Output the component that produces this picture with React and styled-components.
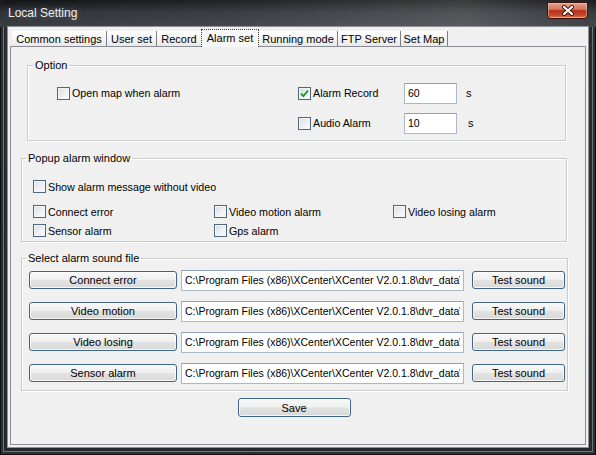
import styled, { createGlobalStyle } from "styled-components";

const GlobalStyle = createGlobalStyle`
  html, body {
    margin: 0;
    padding: 0;
    background: #1b1e21;
  }
  body {
    font-family: "Liberation Sans", Arial, sans-serif;
    font-size: 11px;
    color: #000;
  }
`;

const Window = styled.div`
  width: 596px;
  height: 455px;
  display: flex;
  flex-direction: column;
  background: linear-gradient(180deg, #2a2e32 0%, #25292d 100%);
  box-shadow: inset 0 0 0 1px #0e1011, inset 0 0 0 3px #2b3034, inset 0 0 0 4px #6f7478;
  border-radius: 6px 6px 0 0;
  overflow: hidden;
`;

const TitleBar = styled.div`
  height: 27px;
  flex: none;
  display: flex;
  align-items: flex-start;
  background:
    linear-gradient(90deg, rgba(255,255,255,0) 0%, rgba(255,255,255,0.06) 40%, rgba(255,255,255,0.16) 78%, rgba(255,255,255,0.04) 100%),
    linear-gradient(180deg, #121416 0%, #2f3337 45%, #3a3e42 100%);
`;

const Title = styled.div`
  padding: 6px 0 0 8px;
  color: #eeeeee;
  font-size: 12px;
  line-height: 14px;
  text-shadow: 0 0 6px rgba(255, 255, 255, 0.25);
`;

const CloseButton = styled.div`
  margin: 2px 8px 0 auto;
  width: 41px;
  height: 17px;
  box-sizing: border-box;
  border: 1px solid #3b1510;
  border-radius: 0 0 4px 4px;
  display: flex;
  align-items: center;
  justify-content: center;
  background: linear-gradient(180deg, #e5a08f 0%, #d47561 42%, #b83520 50%, #c3432a 78%, #df7a52 100%);
  box-shadow: inset 0 0 0 1px rgba(255, 210, 200, 0.45);
`;

const Client = styled.div`
  flex: 1;
  margin: 0 8px 8px;
  padding: 2px;
  display: flex;
  flex-direction: column;
  background: #f0f0f0;
  box-shadow: 0 0 0 1px #8d9296;
`;

const TabStrip = styled.div`
  height: 17px;
  flex: none;
  display: flex;
  align-items: flex-end;
  padding-left: 2px;
  position: relative;
  z-index: 1;
`;

const Tab = styled.div`
  width: ${(p) => p.$w}px;
  height: ${(p) => (p.$active ? 18 : 15)}px;
  box-sizing: border-box;
  display: flex;
  align-items: center;
  justify-content: center;
  white-space: nowrap;
  font-size: 11px;
  padding-bottom: ${(p) => (p.$active ? 2 : 0)}px;
  background: ${(p) => (p.$active ? "#f7f7f7" : "linear-gradient(180deg, #ffffff 0%, #f3f3f3 60%, #e9e9e9 100%)")};
  border-right: 1px solid #7d7f82;
  ${(p) =>
    p.$active &&
    `
    margin-left: -1px;
    margin-bottom: -1px;
    border: 1px dotted #3a3a3a;
    border-bottom: none;
  `}
`;

const TabPanel = styled.div`
  flex: 1;
  box-sizing: border-box;
  border: 1px solid #898c95;
  background: #f0f0f0;
  display: flex;
  flex-direction: column;
`;

const Group = styled.fieldset`
  margin: ${(p) => p.$mt}px ${(p) => p.$mr}px 0 ${(p) => p.$ml}px;
  padding: 0;
  min-width: 0;
  border: 1px solid #c9cbcd;
  box-shadow: inset 1px 1px 0 #ffffff, 1px 1px 0 #ffffff;
`;

const Legend = styled.legend`
  margin-left: ${(p) => p.$ml}px;
  padding: 0 2px;
  line-height: 14px;
  font-size: 11px;
`;

const OptionGrid = styled.div`
  display: grid;
  grid-template-columns: 241px 106px 62px auto;
  grid-auto-rows: 30px;
  align-items: center;
  padding: 6px 0 2px 29px;
`;

const PopupBody = styled.div`
  padding: 12px 0 1px 11px;
  display: flex;
  flex-direction: column;
`;

const SingleRow = styled.div`
  height: 19px;
  display: flex;
  align-items: center;
  margin-bottom: 6px;
`;

const PopupGrid = styled.div`
  display: grid;
  grid-template-columns: 181px 179px auto;
  grid-auto-rows: 19px;
  align-items: center;
`;

const CheckLabel = styled.label`
  display: inline-flex;
  align-items: center;
  gap: 2px;
  white-space: nowrap;
  font-size: 10.7px;
`;

const Box = styled.span`
  width: 13px;
  height: 13px;
  box-sizing: border-box;
  border: 1px solid #50667b;
  background: linear-gradient(135deg, #d6dce2 0%, #eef1f4 55%, #fbfbfb 100%);
  box-shadow: inset 0 0 0 1px #f4f6f8;
  display: flex;
  align-items: center;
  justify-content: center;
`;

const Unit = styled.span`
  padding-left: ${(p) => p.$pl || 0}px;
`;

const TextField = styled.input`
  width: ${(p) => p.$w}px;
  height: 21px;
  box-sizing: border-box;
  margin: 0;
  padding: 0 3px;
  border: 1px solid #a9b9cb;
  border-top-color: #8ea2b8;
  background: #fff;
  font-family: "Liberation Sans", Arial, sans-serif;
  font-size: 10.5px;
  color: #000;
  outline: none;
`;

const SoundList = styled.div`
  display: flex;
  flex-direction: column;
  gap: 9px;
  padding: 4px 0 6px 7px;
`;

const SoundRow = styled.div`
  height: 22px;
  display: flex;
  align-items: center;
`;

const PushButton = styled.button`
  width: ${(p) => p.$w}px;
  height: ${(p) => p.$h || 18}px;
  margin: 0 0 0 ${(p) => p.$ml || 0}px;
  padding: 0;
  box-sizing: border-box;
  border: 1px solid #3e6587;
  border-radius: 3px;
  background: linear-gradient(180deg, #f8f8f8 0%, #efefef 48%, #e2e2e2 52%, #d9d9d9 100%);
  box-shadow: inset 0 0 0 1px rgba(255, 255, 255, 0.75);
  font-family: "Liberation Sans", Arial, sans-serif;
  font-size: 11px;
  color: #000;
`;

const SaveRow = styled.div`
  display: flex;
  justify-content: center;
  margin: 7px 18px 0 10px;
`;

const tabs = [
  { label: "Common settings", w: 95 },
  { label: "User set", w: 50 },
  { label: "Record", w: 45 },
  { label: "Alarm set", w: 58, active: true },
  { label: "Running mode", w: 79 },
  { label: "FTP Server", w: 63 },
  { label: "Set Map", w: 47 },
];

const PATH = "C:\\Program Files (x86)\\XCenter\\XCenter V2.0.1.8\\dvr_data\\alarm\\alarm.wav";

const sounds = ["Connect error", "Video motion", "Video losing", "Sensor alarm"];

function Check({ checked, children }) {
  return (
    <CheckLabel>
      <Box>
        {checked && (
          <svg width="9" height="9" viewBox="0 0 9 9">
            <path d="M1 4.6 L3.4 7 L8 1.6" fill="none" stroke="#1d9a27" strokeWidth="1.9" />
          </svg>
        )}
      </Box>
      {children}
    </CheckLabel>
  );
}

export default function App() {
  return (
    <>
      <GlobalStyle />
      <Window>
        <TitleBar>
          <Title>Local Setting</Title>
          <CloseButton>
            <svg width="14" height="11" viewBox="0 0 14 11">
              <path d="M3 2 L11 9 M11 2 L3 9" stroke="#3a1410" strokeWidth="4" strokeLinecap="round" />
              <path d="M3 2 L11 9 M11 2 L3 9" stroke="#ffffff" strokeWidth="2.2" strokeLinecap="round" />
            </svg>
          </CloseButton>
        </TitleBar>
        <Client>
          <TabStrip>
            {tabs.map((t) => (
              <Tab key={t.label} $w={t.w} $active={t.active}>
                {t.label}
              </Tab>
            ))}
          </TabStrip>
          <TabPanel>
            <Group $mt={11} $ml={16} $mr={19}>
              <Legend $ml={5}>Option</Legend>
              <OptionGrid>
                <Check>Open map when alarm</Check>
                <Check checked>Alarm Record</Check>
                <TextField $w={53} defaultValue="60" />
                <Unit>s</Unit>
                <span />
                <Check>Audio Alarm</Check>
                <TextField $w={53} defaultValue="10" />
                <Unit $pl={2}>s</Unit>
              </OptionGrid>
            </Group>
            <Group $mt={10} $ml={10} $mr={18}>
              <Legend $ml={4}>Popup alarm window</Legend>
              <PopupBody>
                <SingleRow>
                  <Check>Show alarm message without video</Check>
                </SingleRow>
                <PopupGrid>
                  <Check>Connect error</Check>
                  <Check>Video motion alarm</Check>
                  <Check>Video losing alarm</Check>
                  <Check>Sensor alarm</Check>
                  <Check>Gps alarm</Check>
                </PopupGrid>
              </PopupBody>
            </Group>
            <Group $mt={9} $ml={10} $mr={17}>
              <Legend $ml={4}>Select alarm sound file</Legend>
              <SoundList>
                {sounds.map((s) => (
                  <SoundRow key={s}>
                    <PushButton $w={148}>{s}</PushButton>
                    <TextField $w={283} style={{ marginLeft: 4 }} readOnly value={PATH} />
                    <PushButton $w={93} $ml={8}>
                      Test sound
                    </PushButton>
                  </SoundRow>
                ))}
              </SoundList>
            </Group>
            <SaveRow>
              <PushButton $w={113} $h={19}>
                Save
              </PushButton>
            </SaveRow>
          </TabPanel>
        </Client>
      </Window>
    </>
  );
}
